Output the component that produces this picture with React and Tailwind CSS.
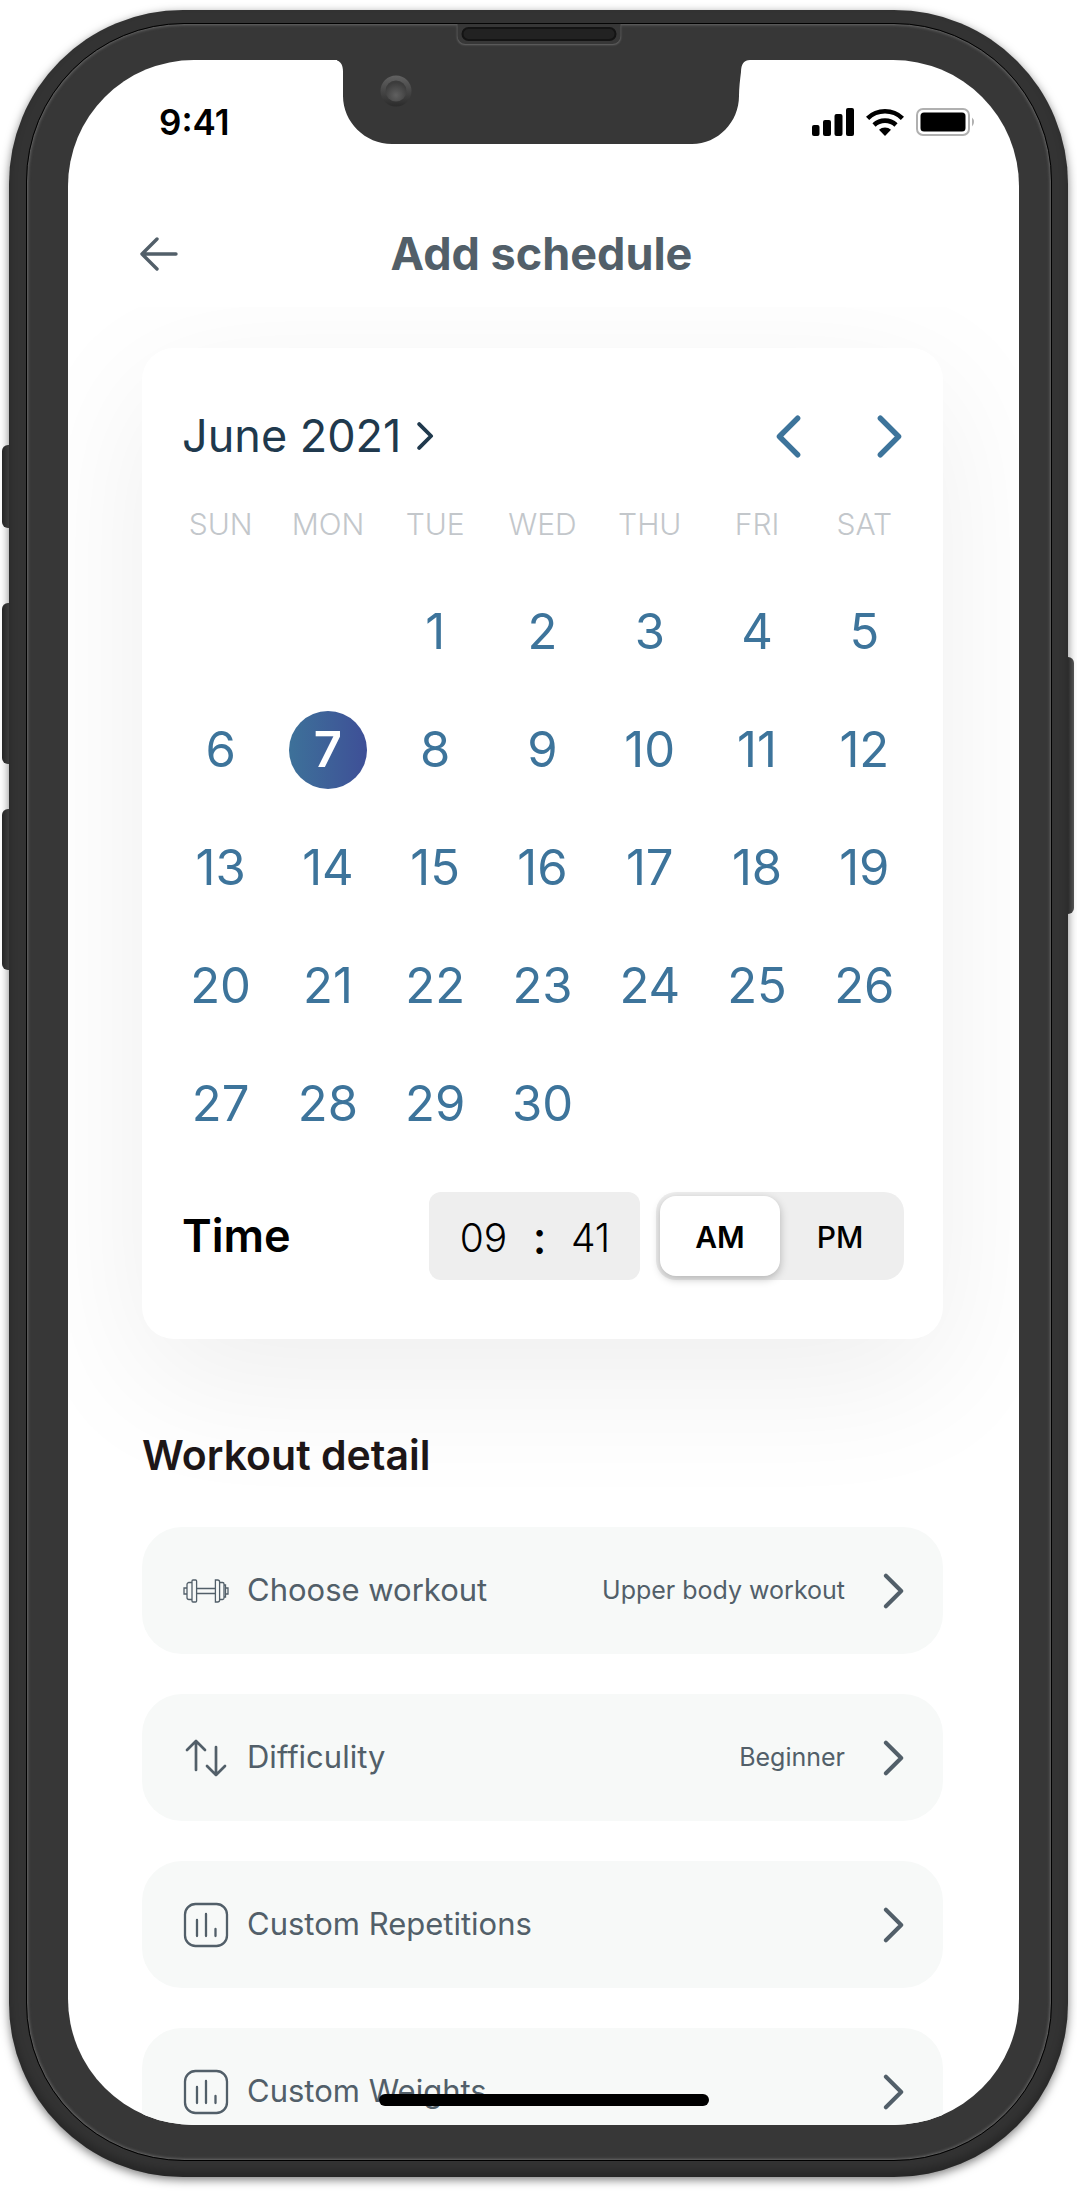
const WEEKDAYS = ["SUN", "MON", "TUE", "WED", "THU", "FRI", "SAT"];

const WEEKS = [
  [null, null, 1, 2, 3, 4, 5],
  [6, 7, 8, 9, 10, 11, 12],
  [13, 14, 15, 16, 17, 18, 19],
  [20, 21, 22, 23, 24, 25, 26],
  [27, 28, 29, 30, null, null, null],
];

const SELECTED_DAY = 7;

function Chevron({ left = false, className }) {
  return (
    <svg
      viewBox="0 0 24 40"
      fill="none"
      stroke="currentColor"
      strokeLinecap="round"
      strokeLinejoin="round"
      className={className}
      aria-hidden="true"
    >
      <path d={left ? "M21 3 4 20l17 17" : "M3 3l17 17L3 37"} />
    </svg>
  );
}

function DumbbellIcon() {
  return (
    <svg width="46" height="24" viewBox="0 0 46 24" fill="none" stroke="currentColor" strokeWidth="1.3" aria-hidden="true">
      <path d="M13.6 9.5h18.8M13.6 14.5h18.8" />
      <rect x="9" y="1" width="4.6" height="22" rx="1" />
      <path d="M9 3.5H6a2 2 0 0 0-2 2v13a2 2 0 0 0 2 2h3" />
      <path d="M4 9H1v6h3" />
      <path d="M32.4 23V1h2.2a2 2 0 0 1 2 2v18a2 2 0 0 1-2 2z" />
      <path d="M37 3.5h2.5a1.5 1.5 0 0 1 1.5 1.5v14a1.5 1.5 0 0 1-1.5 1.5H37" />
      <path d="M41 6h1.5v12H41M42.5 9H45v6h-2.5" />
    </svg>
  );
}

function ArrowsIcon() {
  return (
    <svg width="46" height="38" viewBox="0 0 46 38" fill="none" stroke="currentColor" strokeWidth="2.7" strokeLinecap="round" strokeLinejoin="round" aria-hidden="true">
      <path d="M13 31V2M4 11l9-9 9 9" />
      <path d="M33 8v28M24 27l9 9 9-9" />
    </svg>
  );
}

function ChartIcon() {
  return (
    <svg width="46" height="46" viewBox="0 0 46 46" fill="none" stroke="currentColor" strokeWidth="2.3" strokeLinecap="round" aria-hidden="true">
      <rect x="2" y="2" width="42" height="42" rx="10.5" />
      <path d="M14 18V34M23 12v22M32.500 27v7" />
    </svg>
  );
}

const DETAILS = [
  { label: "Choose workout", value: "Upper body workout", Icon: DumbbellIcon },
  { label: "Difficulity", value: "Beginner", Icon: ArrowsIcon },
  { label: "Custom Repetitions", value: "", Icon: ChartIcon },
  { label: "Custom Weights", value: "", Icon: ChartIcon },
];

function StatusBar() {
  return (
    <div className="flex h-[124px] shrink-0 items-center justify-between pr-[43px] pl-[91px] text-black">
      <span className="text-[35px] leading-none font-semibold">9:41</span>
      <div className="flex items-center gap-3">
        <svg width="42" height="28" viewBox="0 0 42 28" fill="currentColor" aria-label="Signal">
          <rect x="0" y="17" width="7.5" height="11" rx="2" />
          <rect x="11" y="12" width="8" height="16" rx="2" />
          <rect x="22.5" y="6" width="8" height="22" rx="2" />
          <rect x="34" y="0" width="8" height="28" rx="2" />
        </svg>
        <svg width="38" height="28" viewBox="0 0 38 28" fill="none" stroke="currentColor" strokeWidth="4.6" aria-label="Wi-Fi">
          <path d="M1.6 10.300a25 25 0 0 1 34.800 0" />
          <path d="M8 17a16 16 0 0 1 22 0" />
          <path d="M19 28l-6-6.300a9 9 0 0 1 12 0z" fill="currentColor" stroke="none" />
        </svg>
        <svg width="60" height="28" viewBox="0 0 60 28" aria-label="Battery">
          <rect x="1" y="1" width="52" height="26" rx="6" fill="none" stroke="#b0b0b0" strokeWidth="2" />
          <rect x="4.5" y="4.5" width="45" height="19" rx="3.5" fill="#000" />
          <path d="M56 9.500a6 6 0 0 1 0 9z" fill="#b0b0b0" />
        </svg>
      </div>
    </div>
  );
}

function Calendar() {
  return (
    <section className="rounded-[32px] bg-white px-[25px] pt-12 pb-[59px] shadow-[0_40px_140px_rgba(0,0,0,0.07)]">
      <div className="flex h-20 items-center justify-between px-[15px]">
        <button type="button" className="flex items-center gap-4 text-[45px] text-[#20394d]">
          June 2021
          <Chevron className="h-7 w-[17px] stroke-[5.5]" />
        </button>
        <div className="flex items-center gap-[76px] text-[#3d749b]">
          <button type="button" aria-label="Previous month">
            <Chevron left className="h-[43px] w-[26px] stroke-[5]" />
          </button>
          <button type="button" aria-label="Next month">
            <Chevron className="h-[43px] w-[26px] stroke-[5]" />
          </button>
        </div>
      </div>

      <table className="w-full table-fixed text-center">
        <thead>
          <tr className="h-[97px]">
            {WEEKDAYS.map((day) => (
              <th key={day} scope="col" className="p-0 text-[30px] font-light text-[#c3c7cb]">
                {day}
              </th>
            ))}
          </tr>
        </thead>
        <tbody>
          {WEEKS.map((week, i) => (
            <tr key={i} className="h-[118px]">
              {week.map((day, j) => (
                <td key={j} className="p-0">
                  {day && (
                    <button
                      type="button"
                      className={
                        day === SELECTED_DAY
                          ? "mx-auto flex size-[78px] items-center justify-center rounded-full bg-linear-to-r from-[#3d7199] to-[#3e4f97] text-[49px] font-semibold text-white"
                          : "mx-auto flex size-[78px] items-center justify-center rounded-full text-[49px] text-[#3d749b]"
                      }
                    >
                      {day}
                    </button>
                  )}
                </td>
              ))}
            </tr>
          ))}
        </tbody>
      </table>

      <div className="mt-[29px] flex h-[88px] items-center pr-[14px] pl-[15px] text-black">
        <h2 className="flex-1 text-[45px] font-semibold">Time</h2>
        <div className="flex h-full w-[211px] items-center justify-center rounded-xl bg-[#eeeeee] pt-1 text-[39px]">
          <input aria-label="Hour" defaultValue="09" className="w-[66px] bg-transparent text-center font-light" />
          <span className="w-[46px] text-center text-[45px] font-medium">:</span>
          <input aria-label="Minute" defaultValue="41" className="w-[56px] bg-transparent text-center font-light" />
        </div>
        <div className="ml-4 flex h-full w-[248px] rounded-[20px] bg-[#eeeeee] p-1 text-[30px]">
          {["AM", "PM"].map((period) => (
            <label
              key={period}
              className="flex flex-1 items-center justify-center rounded-2xl pt-0.5 font-medium has-checked:bg-white has-checked:font-semibold has-checked:shadow-[0_3px_8px_rgba(0,0,0,0.25)]"
            >
              <input type="radio" name="period" value={period} defaultChecked={period === "AM"} className="sr-only" />
              {period}
            </label>
          ))}
        </div>
      </div>
    </section>
  );
}

function DetailRow({ label, value, Icon }) {
  return (
    <li>
      <button
        type="button"
        className="flex h-[127px] w-full items-center rounded-[40px] bg-[#f7f9f8] pr-[38px] pl-[41px] text-[#525f69]"
      >
        <span className="mr-[18px] flex w-[46px] justify-center">
          <Icon />
        </span>
        <span className="flex-1 text-left text-[31px]">{label}</span>
        <span className="text-[25px]">{value}</span>
        <Chevron className="ml-[38px] h-[36px] w-[22px] stroke-[4.5]" />
      </button>
    </li>
  );
}

function Notch() {
  return (
    <svg
      width="414"
      height="84"
      viewBox="0 0 414 84"
      className="absolute top-0 left-1/2 z-10 -translate-x-1/2"
      aria-hidden="true"
    >
      <defs>
        <linearGradient id="ring" x1="0" y1="0" x2="0" y2="1">
          <stop offset="0" stopColor="#626262" />
          <stop offset="1" stopColor="#2b2b2b" />
        </linearGradient>
        <radialGradient id="lens" cx="0.5" cy="0.7" r="0.6">
          <stop offset="0" stopColor="#606060" />
          <stop offset="1" stopColor="#3c3c3c" />
        </radialGradient>
      </defs>
      <path
        d="M-3 0C3 0 6 4 6 12v24c0 26 22 48 49 48h300c26 0 47-22 47-48 0-8 1-16 2-24 0-8 3-12 9-12z"
        fill="#373737"
      />
      <circle cx="59" cy="31" r="15.5" fill="url(#ring)" />
      <circle cx="59" cy="31" r="10.5" fill="url(#lens)" />
    </svg>
  );
}

export default function App() {
  return (
    <div className="h-screen w-full bg-white px-[9px] pt-[10px] pb-4 font-[Inter,sans-serif]">
      <div className="relative h-full rounded-[174px] bg-[#333333] pt-[13px] pr-4 pb-4 pl-[17px] shadow-[0_3px_10px_rgba(0,0,0,0.5),inset_0_-6px_8px_rgba(0,0,0,0.25)]">
        <span className="absolute top-[435px] -left-[7px] h-[83px] w-[7px] rounded-l-md bg-linear-to-r from-[#262626] to-[#3d3d3d]" />
        <span className="absolute top-[593px] -left-[7px] h-[161px] w-[7px] rounded-l-md bg-linear-to-r from-[#262626] to-[#3d3d3d]" />
        <span className="absolute top-[799px] -left-[7px] h-[161px] w-[7px] rounded-l-md bg-linear-to-r from-[#262626] to-[#3d3d3d]" />
        <span className="absolute top-[647px] -right-[6px] h-[257px] w-[6px] rounded-r-md bg-linear-to-r from-[#2b2b2b] to-[#555555]" />

        <div className="relative h-full rounded-[158px] border border-black bg-[#373737] pt-[36px] pr-[32px] pb-[35px] pl-[41px] shadow-[inset_0_0_3px_1px_#6a6a6a]">
          <div className="absolute top-0 left-1/2 flex h-5 w-[163px] -translate-x-1/2 items-center justify-center rounded-b-lg bg-[#373737] shadow-[0_1px_2px_#666666]">
            <span className="h-[14px] w-[155px] rounded-lg border-2 border-[#141414] bg-[#222222]" />
          </div>

          <div className="relative flex h-full flex-col overflow-hidden rounded-[126px] bg-white">
            <Notch />
            <StatusBar />
            <header className="flex h-[123px] shrink-0 items-center pt-4 pr-[76px] pl-[72px] text-[#525f69]">
              <button type="button" aria-label="Back">
                <svg width="38" height="34" viewBox="0 0 38 34" fill="none" stroke="currentColor" strokeWidth="3.4" strokeLinecap="round" strokeLinejoin="round" aria-hidden="true">
                  <path d="M36 17H2M17 2 2 17l15 15" />
                </svg>
              </button>
              <h1 className="mr-[38px] flex-1 text-center text-[45px] font-bold">Add schedule</h1>
            </header>

            <main className="min-h-0 flex-1 overflow-y-auto pt-[41px] pr-[76px] pl-[74px] [scrollbar-width:none]">
              <Calendar />
              <h2 className="mt-[86px] text-[41px] leading-[60px] font-semibold text-[#1d1617]">Workout detail</h2>
              <ul className="mt-[42px] flex flex-col gap-10 pb-20">
                {DETAILS.map((item) => (
                  <DetailRow key={item.label} {...item} />
                ))}
              </ul>
            </main>

            <div className="absolute bottom-[19px] left-1/2 h-3 w-[330px] -translate-x-1/2 rounded-full bg-black" />
          </div>
        </div>
      </div>
    </div>
  );
}
